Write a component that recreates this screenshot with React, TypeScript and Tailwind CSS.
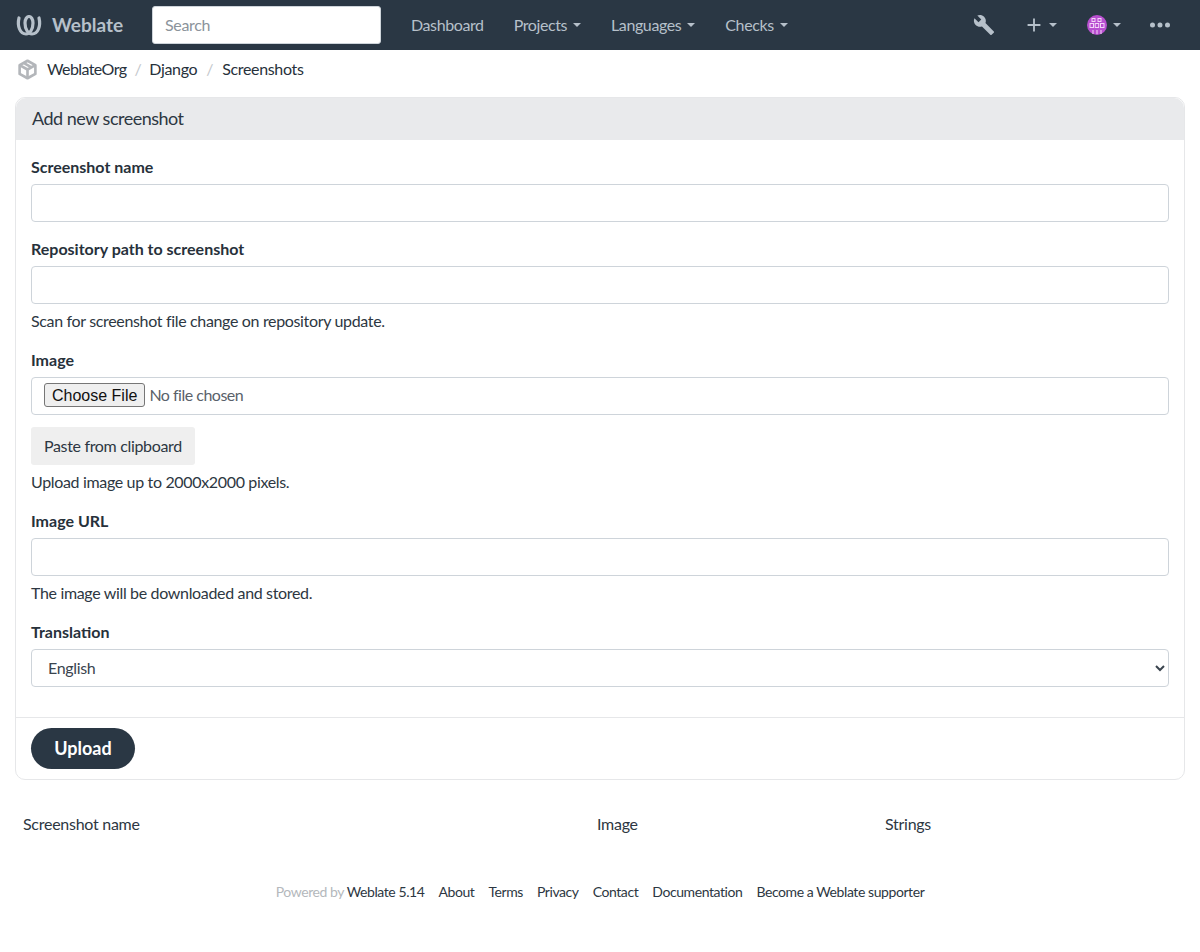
const font = "font-['Lato','Noto_Sans',sans-serif]";

const mdi = {
  wrench: 'M22.7,19L13.6,9.9C14.5,7.6 14,4.9 12.1,3C10.1,1 7.1,0.6 4.7,1.7L9,6L6,9L1.6,4.7C0.4,7.1 0.9,10.1 2.9,12.1C4.8,14 7.5,14.5 9.8,13.6L18.9,22.7C19.3,23.1 19.9,23.1 20.3,22.7L22.6,20.4C23.1,20 23.1,19.3 22.7,19Z',
  plus: 'M19,13H13V19H11V13H5V11H11V5H13V11H19V13Z',
  dots: 'M16,12A2,2 0 0,1 18,10A2,2 0 0,1 20,12A2,2 0 0,1 18,14A2,2 0 0,1 16,12M10,12A2,2 0 0,1 12,10A2,2 0 0,1 14,12A2,2 0 0,1 12,14A2,2 0 0,1 10,12M4,12A2,2 0 0,1 6,10A2,2 0 0,1 8,12A2,2 0 0,1 6,14A2,2 0 0,1 4,12Z',
};

function Icon({ d, className }: { d: string; className?: string }) {
  return (
    <svg viewBox="0 0 24 24" className={className} fill="currentColor">
      <path d={d} />
    </svg>
  );
}

function Caret({ className = 'ml-[6px]' }: { className?: string }) {
  return <span className={`${className} inline-block w-0 h-0 border-x-[4px] border-x-transparent border-t-[4px] border-t-current`} />;
}

function Logo() {
  return (
    <svg viewBox="0 0 28 22" className="w-[28px] h-[22px]" fill="none" stroke="#b6c0ca" strokeWidth="3.2" strokeLinecap="round">
      <path d="M4 4 C2 12 5 20 11 20 C15 20 18 15 18 9 C18 5 16 2.5 14 2.5" />
      <path d="M24 4 C26 12 23 20 17 20 C13 20 10 15 10 9 C10 5 12 2.5 14 2.5" />
    </svg>
  );
}

function Avatar() {
  return (
    <svg viewBox="0 0 20 20" className="w-[20px] h-[20px]">
      <circle cx="10" cy="10" r="10" fill="#b84fd0" />
      <g fill="none" stroke="#f3d4f8" strokeWidth="1">
        <rect x="5" y="3.5" width="3" height="3" />
        <rect x="11" y="3.5" width="3" height="3" />
        <rect x="3" y="8.5" width="3.5" height="4" />
        <rect x="8.2" y="8.5" width="3.5" height="4" />
        <rect x="13.5" y="8.5" width="3.5" height="4" />
        <path d="M6 15v4M10 15v4M14 15v4" />
      </g>
    </svg>
  );
}

function NavLink({ label, caret }: { label: string; caret?: boolean }) {
  return (
    <a className="flex items-center px-[15px] pb-[1px] h-[50px] text-[#b6c0ca] text-[16px]">
      {label}
      {caret && <Caret />}
    </a>
  );
}

function Label({ children }: { children: React.ReactNode }) {
  return <label className="block h-[24px] leading-[23px] font-bold tracking-normal text-[16px] mb-[5px] text-[#27313b]">{children}</label>;
}

function Help({ children }: { children: React.ReactNode }) {
  return <p className="mt-[5px] h-[24px] leading-[23px] text-[16px] text-[#2d3742]">{children}</p>;
}

const inputCls = 'block w-full h-[38px] bg-white border border-[#ced4da] rounded-[4px] px-[12px] outline-none';

export default function App() {
  return (
    <div className={`${font} min-h-[952px] bg-white text-[#27313b] text-[16px] tracking-[-0.34px]`}>
      <nav className="h-[50px] bg-[#2a3744] flex items-center pl-[15px] pr-[29px]">
        <a className="flex items-center w-[137px]">
          <Logo />
          <span className="ml-[9px] text-[#b6c0ca] text-[19px] font-bold tracking-normal">Weblate</span>
        </a>
        <input
          placeholder="Search"
          className="w-[229px] h-[38px] bg-white rounded-[3px] border border-[#ced4da] px-[12px] pb-[2px] text-[16px] outline-none placeholder:text-[#8b939b]"
        />
        <div className="flex ml-[15px] tracking-[-0.4px]">
          <NavLink label="Dashboard" />
          <NavLink label="Projects" caret />
          <NavLink label="Languages" caret />
          <NavLink label="Checks" caret />
        </div>
        <div className="ml-auto flex items-center text-[#b6c0ca]">
          <Icon d={mdi.wrench} className="w-[22px] h-[22px]" />
          <span className="flex items-center ml-[28px]">
            <Icon d={mdi.plus} className="w-[22px] h-[22px]" />
            <Caret className="ml-[4px]" />
          </span>
          <span className="flex items-center ml-[30px]">
            <Avatar />
            <Caret />
          </span>
          <Icon d={mdi.dots} className="w-[30px] h-[30px] ml-[24px] mr-[-4px]" />
        </div>
      </nav>

      <div className="h-[38px] mb-[9px] flex items-center pl-[17px]">
        <svg viewBox="0 0 24 24" className="w-[21px] h-[21px] text-[#b3b6ba]" fill="none" stroke="currentColor" strokeWidth="3" strokeLinejoin="round">
          <path d="M12 2 21 7v10l-9 5-9-5V7z" />
          <path d="M3 7l9 5 9-5M12 12v10M7.5 4.5l9 5" />
        </svg>
        <span className="ml-[9px] tracking-[-0.6px]">WeblateOrg</span>
        <span className="mx-[8px] text-[#c4c8cc]">/</span>
        <span>Django</span>
        <span className="mx-[9px] text-[#c4c8cc]">/</span>
        <span>Screenshots</span>
      </div>

      <section className="mx-[15px] h-[683px] border border-[#e6e7e9] rounded-[10px] flex flex-col">
        <h2 className="h-[42px] shrink-0 bg-[#e9eaec] rounded-t-[10px] pl-[16px] pb-[2px] flex items-center text-[18px] tracking-[-0.5px] text-[#2d3742]">Add new screenshot</h2>
        <div className="px-[15px] pt-[15px]">
          <Label>Screenshot name</Label>
          <input className={inputCls} />

          <div className="mt-[15px]">
            <Label>Repository path to screenshot</Label>
            <input className={inputCls} />
            <Help>Scan for screenshot file change on repository update.</Help>
          </div>

          <div className="mt-[15px]">
            <Label>Image</Label>
            <div className="h-[38px] border border-[#ced4da] rounded-[4px] flex items-center pl-[12px] pb-[2px] text-[#59616a]">
              <input type="file" className="w-full text-[16px] tracking-[-0.5px] file:font-['Liberation_Sans',sans-serif] file:tracking-normal file:text-[#111] file:text-[16px] file:h-[24px] file:px-[7px] file:mr-[4px] file:bg-[#efefef] file:border file:border-[#767676] file:rounded-[3px]" />
            </div>
            <button className="mt-[12px] block h-[38px] px-[13px] pb-[1px] bg-[#efefef] rounded-[3px] text-[16px] text-[#2d3742]">Paste from clipboard</button>
            <Help>Upload image up to 2000x2000 pixels.</Help>
          </div>

          <div className="mt-[15px]">
            <Label>Image URL</Label>
            <input className={inputCls} />
            <Help>The image will be downloaded and stored.</Help>
          </div>

          <div className="mt-[15px]">
            <Label>Translation</Label>
            <select className="block w-full h-[38px] bg-white border border-[#ced4da] rounded-[4px] pl-[12px] pr-[2px] pb-[2px] text-[16px] text-[#3a444e]">
              <option>English</option>
            </select>
          </div>
        </div>
        <div className="mt-[30px] border-t border-[#e6e7e9] px-[15px] pt-[10px]">
          <button className="h-[41px] w-[104px] rounded-full bg-[#2a3744] text-white font-bold text-[18px] tracking-normal">Upload</button>
        </div>
      </section>

      <div className="mx-[15px] mt-[32px] grid grid-cols-[574px_288px_1fr] px-[8px] h-[24px] leading-[23px] tracking-[-0.27px] text-[#2d3742]">
        <span>Screenshot name</span>
        <span>Image</span>
        <span>Strings</span>
      </div>

      <footer className="mt-[45px] flex justify-center gap-[14px] text-[14px] tracking-[-0.42px] text-[#2d3742]">
        <span><span className="text-[#b4b8bc]">Powered by </span>Weblate 5.14</span>
        <span>About</span>
        <span>Terms</span>
        <span>Privacy</span>
        <span>Contact</span>
        <span>Documentation</span>
        <span>Become a Weblate supporter</span>
      </footer>
    </div>
  );
}
